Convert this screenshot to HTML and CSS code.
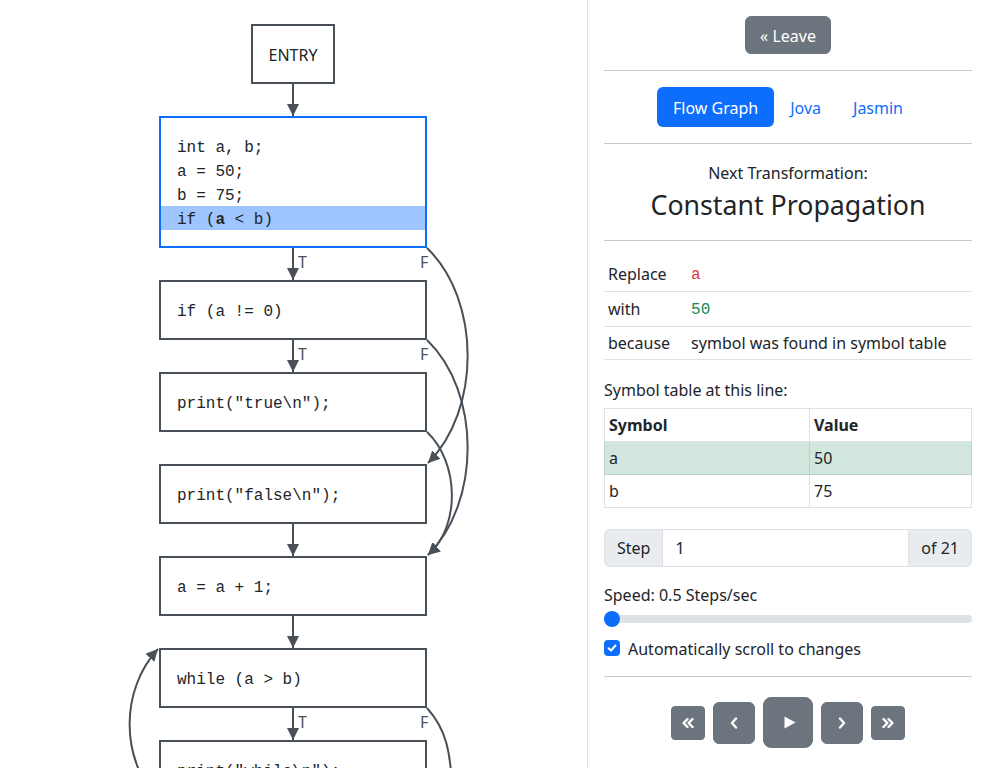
FILE: index.html
```html
<!DOCTYPE html>
<html lang="en">
<head>
<meta charset="utf-8">
<title>Flow Graph</title>
<link rel="stylesheet" href="styles.css">
</head>
<body>
<div class="app">
  <div class="graph-pane">
    <div class="graph">
      <div class="node entry">ENTRY</div>
      <div class="node selected">
        <div class="line">int a, b;</div>
        <div class="line">a = 50;</div>
        <div class="line">b = 75;</div>
        <div class="line hl">if (<b>a</b> &lt; b)</div>
      </div>
      <div class="node">if (a != 0)</div>
      <div class="node">print("true\n");</div>
      <div class="node">print("false\n");</div>
      <div class="node">a = a + 1;</div>
      <div class="node">while (a &gt; b)</div>
      <div class="node">print("while\n");</div>
    </div>
    <svg class="edges" width="587" height="900" viewBox="0 0 587 900">
      <defs>
        <marker id="ah" viewBox="0 0 12 12" refX="12" refY="6" markerWidth="12" markerHeight="12" markerUnits="userSpaceOnUse" orient="auto">
          <path d="M0,0 L12,6 L0,12 z" fill="#495057"/>
        </marker>
      </defs>
      <g class="edge" fill="none" stroke="#495057" stroke-width="2" marker-end="url(#ah)">
        <path d="M293,84 L293,116"/>
        <path d="M293,248 L293,280"/>
        <path d="M293,340 L293,372"/>
        <path d="M293,524 L293,556"/>
        <path d="M293,616 L293,648"/>
        <path d="M293,708 L293,740"/>
        <path d="M427,248 C481,300 481,410 428,463"/>
        <path d="M427,340 C481,392 481,502 428,555"/>
        <path d="M427,432 C459,462 461,526 428,555"/>
        <path d="M159,800 C120,760 120,690 158,649"/>
      </g>
      <path d="M427,708 C445,728 452,750 452,800" fill="none" stroke="#495057" stroke-width="2"/>
      <g class="labels">
        <text x="298" y="268">T</text>
        <text x="420" y="268">F</text>
        <text x="298" y="360">T</text>
        <text x="420" y="360">F</text>
        <text x="298" y="728">T</text>
        <text x="420" y="728">F</text>
      </g>
    </svg>
  </div>

  <aside class="side">
    <div class="center">
      <button class="btn btn-secondary">« Leave</button>
    </div>
    <hr>
    <nav class="pills">
      <a class="pill active">Flow Graph</a>
      <a class="pill">Jova</a>
      <a class="pill">Jasmin</a>
    </nav>
    <hr>
    <div class="next">
      <p class="next-label">Next Transformation:</p>
      <h3 class="next-title">Constant Propagation</h3>
    </div>
    <hr>
    <table class="info">
      <tr><td>Replace</td><td><code class="red">a</code></td></tr>
      <tr><td>with</td><td><code class="green">50</code></td></tr>
      <tr><td>because</td><td>symbol was found in symbol table</td></tr>
    </table>
    <p class="sym-label">Symbol table at this line:</p>
    <table class="symbols">
      <thead><tr><th class="c1">Symbol</th><th>Value</th></tr></thead>
      <tbody>
        <tr class="success"><td>a</td><td>50</td></tr>
        <tr><td>b</td><td>75</td></tr>
      </tbody>
    </table>
    <div class="input-group">
      <span class="addon first">Step</span>
      <input class="step-input" type="text" value="1">
      <span class="addon last">of 21</span>
    </div>
    <div class="speed">Speed: 0.5 Steps/sec</div>
    <input class="range" type="range" min="0" max="10" step="0.5" value="0">
    <div class="check">
      <span class="box"><svg width="12" height="12" viewBox="0 0 12 12"><polyline points="2.5,6.2 5,8.5 9.5,3.5" fill="none" stroke="#fff" stroke-width="2" stroke-linecap="round" stroke-linejoin="round"/></svg></span>
      <span>Automatically scroll to changes</span>
    </div>
    <hr class="hr-last">
    <div class="controls">
      <button class="ctl sm"><svg width="12" height="10" viewBox="0 0 12 10"><polyline points="5.5,1 1.6,5 5.5,9" fill="none" stroke="#fff" stroke-width="2.4" stroke-linecap="round" stroke-linejoin="round"/><polyline points="10.5,1 6.6,5 10.5,9" fill="none" stroke="#fff" stroke-width="2.4" stroke-linecap="round" stroke-linejoin="round"/></svg></button>
      <button class="ctl md"><svg width="8" height="12" viewBox="0 0 8 12"><polyline points="6,1.5 2,6 6,10.5" fill="none" stroke="#fff" stroke-width="2.4" stroke-linecap="round" stroke-linejoin="round"/></svg></button>
      <button class="ctl lg"><svg width="12" height="13" viewBox="0 0 12 13"><path d="M0.5,0.5 L11.5,6.5 L0.5,12.5 z" fill="#fff"/></svg></button>
      <button class="ctl md"><svg width="8" height="12" viewBox="0 0 8 12"><polyline points="2,1.5 6,6 2,10.5" fill="none" stroke="#fff" stroke-width="2.4" stroke-linecap="round" stroke-linejoin="round"/></svg></button>
      <button class="ctl sm"><svg width="12" height="10" viewBox="0 0 12 10"><polyline points="1.5,1 5.4,5 1.5,9" fill="none" stroke="#fff" stroke-width="2.4" stroke-linecap="round" stroke-linejoin="round"/><polyline points="6.5,1 10.4,5 6.5,9" fill="none" stroke="#fff" stroke-width="2.4" stroke-linecap="round" stroke-linejoin="round"/></svg></button>
    </div>
  </aside>
</div>
</body>
</html>
```

FILE: styles.css
```css
* { box-sizing: border-box; }

html, body {
  margin: 0;
  padding: 0;
  background: #fff;
}

body {
  font-family: "Noto Sans", "Liberation Sans", sans-serif;
  font-size: 16px;
  line-height: 1.5;
  color: #212529;
  height: 768px;
  overflow: hidden;
}

.app {
  display: grid;
  grid-template-columns: 587px 401px;
  height: 768px;
  overflow: hidden;
}

/* ---------- graph ---------- */
.graph-pane {
  position: relative;
  padding-right: 1px;
  overflow: hidden;
}

.graph {
  display: flex;
  flex-direction: column;
  align-items: center;
  gap: 32px;
  padding-top: 24px;
}

.node {
  width: 268px;
  height: 60px;
  border: 2px solid #495057;
  padding: 18px 16px 14px;
  background: #fff;
  font-family: "Liberation Mono", "DejaVu Sans Mono", monospace;
  font-size: 16px;
  line-height: 24px;
  color: #212529;
  white-space: nowrap;
  flex: none;
}

.node.entry {
  width: auto;
  padding: 17px 16px 15px;
  font-family: "Noto Sans", "Liberation Sans", sans-serif;
}

.node.selected {
  height: auto;
  border-color: #0d6efd;
  padding: 16px 0;
}

.node .line {
  padding: 4px 16px 0;
  line-height: 20px;
  white-space: pre;
}

.node .line.hl {
  background: #9ec5fe;
}

.edges {
  position: absolute;
  top: 0;
  left: 0;
  pointer-events: none;
  overflow: visible;
}

.labels text {
  font-family: "Noto Sans", "Liberation Sans", sans-serif;
  font-size: 16px;
  fill: #495057;
}

/* ---------- side panel ---------- */
.side {
  border-left: 1px solid #dee2e6;
  padding: 16px 16px 0;
}

.center {
  display: flex;
  justify-content: center;
}

hr {
  margin: 16px 0;
  border: 0;
  border-top: 1px solid #c8c9ca;
  height: 0;
}

.btn {
  font-family: inherit;
  font-size: 16px;
  line-height: 24px;
  height: 38px;
  padding: 1px 14px 0;
  border: 1px solid transparent;
  border-radius: 6px;
  cursor: pointer;
}

.btn-secondary {
  background: #6c757d;
  border-color: #6c757d;
  color: #fff;
}

.pills {
  display: flex;
  justify-content: center;
}

.pill {
  display: block;
  padding: 9px 16px 7px;
  color: #0d6efd;
  border-radius: 6px;
  line-height: 24px;
}

.pill.active {
  background: #0d6efd;
  color: #fff;
}

.next {
  text-align: center;
  padding: 1px 0 3px;
}

.next-label {
  margin: 0 0 4px;
}

.next-title {
  margin: 0;
  font-size: 26.73px;
  font-weight: 400;
  line-height: 1.2;
}

table {
  border-collapse: collapse;
  width: 100%;
}

.info {
  margin-bottom: 18px;
}

.info td {
  padding: 4px;
  border-bottom: 1px solid #dee2e6;
  white-space: nowrap;
}

.info td:first-child {
  width: 1%;
  padding-right: 17px;
}

code {
  font-family: "Liberation Mono", "DejaVu Sans Mono", monospace;
  font-size: 16px;
}

.red { color: #dc3545; }
.green { color: #198754; }

.sym-label {
  margin: 0 0 6px;
}

.symbols {
  margin-bottom: 21px;
  table-layout: fixed;
}

.symbols th,
.symbols td {
  border: 1px solid #dee2e6;
  padding: 4px;
  text-align: left;
  line-height: 24px;
}

.symbols th {
  font-weight: 700;
}

.symbols .c1 {
  width: 205px;
}

.symbols tr.success td {
  background: #d1e7dd;
  border-color: #bcd0c7;
}

.input-group {
  display: flex;
  height: 38px;
  margin-bottom: 16px;
}

.addon {
  display: flex;
  align-items: center;
  padding: 6px 12px;
  background: #e9ecef;
  border: 1px solid #dee2e6;
  line-height: 24px;
}

.addon.first {
  border-radius: 6px 0 0 6px;
}

.addon.last {
  border-radius: 0 6px 6px 0;
}

.step-input {
  flex: 1;
  min-width: 0;
  border: 1px solid #dee2e6;
  border-left: 0;
  border-right: 0;
  padding: 6px 12px;
  font-family: inherit;
  font-size: 16px;
  line-height: 24px;
  color: #212529;
  outline: none;
}

.speed {
  line-height: 24px;
}

.range {
  display: block;
  width: 100%;
  height: 24px;
  margin: 0;
  padding: 0;
  background: transparent;
  -webkit-appearance: none;
  appearance: none;
}

.range::-webkit-slider-runnable-track {
  height: 8px;
  background: #dee2e6;
  border-radius: 16px;
}

.range::-webkit-slider-thumb {
  -webkit-appearance: none;
  appearance: none;
  width: 16px;
  height: 16px;
  margin-top: -4px;
  border-radius: 50%;
  background: #0d6efd;
  border: 0;
}

.check {
  display: flex;
  align-items: flex-start;
  gap: 8px;
  margin-top: 6px;
  line-height: 24px;
}

.check .box {
  width: 16px;
  height: 16px;
  margin-top: 3px;
  border-radius: 4px;
  background: #0d6efd;
  display: flex;
  align-items: center;
  justify-content: center;
  flex: none;
}

.hr-last {
  margin: 15px 0 20px;
}

.controls {
  display: flex;
  justify-content: center;
  align-items: center;
  gap: 8px;
}

.ctl {
  display: flex;
  align-items: center;
  justify-content: center;
  background: #6c757d;
  border: 1px solid #6c757d;
  padding: 0;
  cursor: pointer;
}

.ctl.sm {
  width: 34px;
  height: 34px;
  border-radius: 4px;
}

.ctl.md {
  width: 42px;
  height: 42px;
  border-radius: 6px;
}

.ctl.lg {
  width: 50px;
  height: 51px;
  border-radius: 8px;
}

.ctl.lg svg {
  margin-left: 3px;
}
```
